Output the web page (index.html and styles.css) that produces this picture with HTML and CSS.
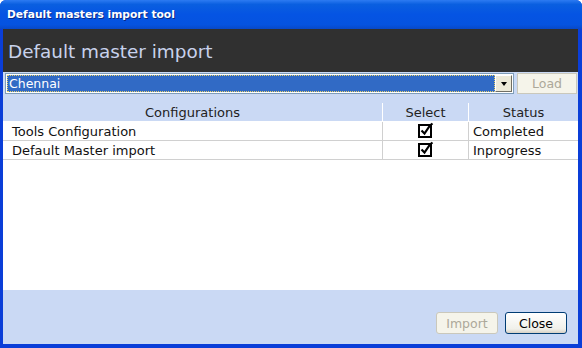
FILE: index.html
```html
<!DOCTYPE html>
<html>
<head>
<meta charset="utf-8">
<link rel="stylesheet" href="styles.css">
</head>
<body>
<div class="window">
  <div class="titlebar"><span class="title">Default masters import tool</span></div>
  <div class="client">
    <div class="banner">Default master import</div>
    <div class="toolbar">
      <div class="combo">
        <div class="combo-value">Chennai</div>
        <div class="combo-btn"><span class="arrow"></span></div>
      </div>
      <button class="btn btn-load" disabled>Load</button>
    </div>
    <div class="grid">
      <div class="row head">
        <div class="cell c1">Configurations</div>
        <div class="cell c2">Select</div>
        <div class="cell c3">Status</div>
      </div>
      <div class="row">
        <div class="cell c1 left">Tools Configuration</div>
        <div class="cell c2"><span class="check"><svg width="16" height="16" viewBox="0 0 16 16"><rect x="1" y="3" width="12" height="12" fill="#fff" stroke="#000" stroke-width="2"/><path d="M3.5 8.5 L6.5 11.5 L12 3.5 L14.5 1.5" fill="none" stroke="#000" stroke-width="2.2"/></svg></span></div>
        <div class="cell c3 left">Completed</div>
      </div>
      <div class="row">
        <div class="cell c1 left">Default Master import</div>
        <div class="cell c2"><span class="check"><svg width="16" height="16" viewBox="0 0 16 16"><rect x="1" y="3" width="12" height="12" fill="#fff" stroke="#000" stroke-width="2"/><path d="M3.5 8.5 L6.5 11.5 L12 3.5 L14.5 1.5" fill="none" stroke="#000" stroke-width="2.2"/></svg></span></div>
        <div class="cell c3 left">Inprogress</div>
      </div>
      <div class="empty"></div>
    </div>
    <div class="footer">
      <button class="btn btn-import" disabled>Import</button>
      <button class="btn btn-close">Close</button>
    </div>
  </div>
</div>
</body>
</html>
```
FILE: styles.css
```css
html, body { margin: 0; padding: 0; }
body { width: 582px; height: 348px; overflow: hidden; font-family: "DejaVu Sans", Verdana, sans-serif; }
.window {
  width: 582px; height: 348px; box-sizing: border-box;
  display: flex; flex-direction: column;
  background: #0A3ED8;
  border-radius: 6px 6px 0 0;
  overflow: hidden;
}
.titlebar {
  height: 29px; flex: none;
  background: linear-gradient(#2D7BF2 0%, #0A5FE0 15%, #0554E3 50%, #0553E0 85%, #0848C8 100%);
  display: flex; align-items: center;
  padding-left: 7px; box-sizing: border-box;
}
.title { color: #fff; font-weight: bold; font-size: 10.7px; text-shadow: 1px 1px 0 #0a2a88; }
.client {
  flex: 1; display: flex; flex-direction: column;
  margin: 0 4px 4px 3px;
  background: #CAD9F4;
}
.banner {
  height: 43px; flex: none; background: #303030;
  color: #C8D2EC; font-size: 18.4px; padding-left: 5px;
  display: flex; align-items: center; box-sizing: border-box; padding-top: 2px;
}
.toolbar { display: flex; align-items: center; height: 23px; gap: 3px; padding: 0 0 0 2px; flex: none; }
.combo {
  width: 509px; height: 21px; box-sizing: border-box; display: flex;
  border: 1px solid #7F9DB9; background: #fff; padding: 1px;
}
.combo-value {
  flex: 1; background: #316AC5; color: #fff; font-size: 12.5px;
  outline: 1px dotted #E5D06A; outline-offset: -1px;
  display: flex; align-items: center; padding-left: 2px;
}
.combo-btn {
  width: 17px; background: #ECE9D8; border: 1px solid #fff; border-right-color: #716F64; border-bottom-color: #716F64; box-sizing: border-box;
  display: flex; align-items: center; justify-content: center;
}
.arrow { width: 0; height: 0; border-left: 3.5px solid transparent; border-right: 3.5px solid transparent; border-top: 4px solid #000; }
.btn {
  font-family: "DejaVu Sans", Verdana, sans-serif; font-size: 12.5px;
  box-sizing: border-box; padding: 0; cursor: default;
}
.btn-load {
  width: 60px; height: 21px; background: #F5F4EA; border: 1px solid #CAC8BB; color: #ACA899; border-radius: 0;
}
.grid { flex: 1; display: flex; flex-direction: column; margin-top: 8px; background: #fff; }
.row { display: flex; height: 19px; border-bottom: 1px solid #D0D0D0; flex: none; box-sizing: border-box; }
.row.head { background: #CAD9F4; border-bottom: 1px solid #fff; }
.cell { display: flex; align-items: center; justify-content: center; font-size: 13px; color: #111; box-sizing: border-box; }
.head .cell { color: #222; }
.c1 { width: 380px; border-right: 1px solid #D0D0D0; }
.c2 { width: 86px; border-right: 1px solid #D0D0D0; }
.c3 { flex: 1; }
.head .c1, .head .c2 { border-right-color: #fff; }
.cell.left { justify-content: flex-start; padding-left: 9px; }
.c3.left { padding-left: 4px; }
.check { display: flex; margin-left: 1px; margin-top: -3px; }
.empty { flex: 1; border-bottom: 1px solid #fff; }
.footer { height: 54px; flex: none; display: flex; justify-content: flex-end; align-items: flex-end; gap: 7px; padding: 0 11px 10px 0; box-sizing: border-box; }
.btn-import { width: 62px; height: 22px; background: #F5F4EA; border: 1px solid #CAC8BB; color: #ACA899; border-radius: 3px; }
.btn-close { width: 62px; height: 22px; background: linear-gradient(#fff, #F0F0EA 80%, #D6D0C5); border: 1px solid #003C74; color: #000; border-radius: 3px; }
```
